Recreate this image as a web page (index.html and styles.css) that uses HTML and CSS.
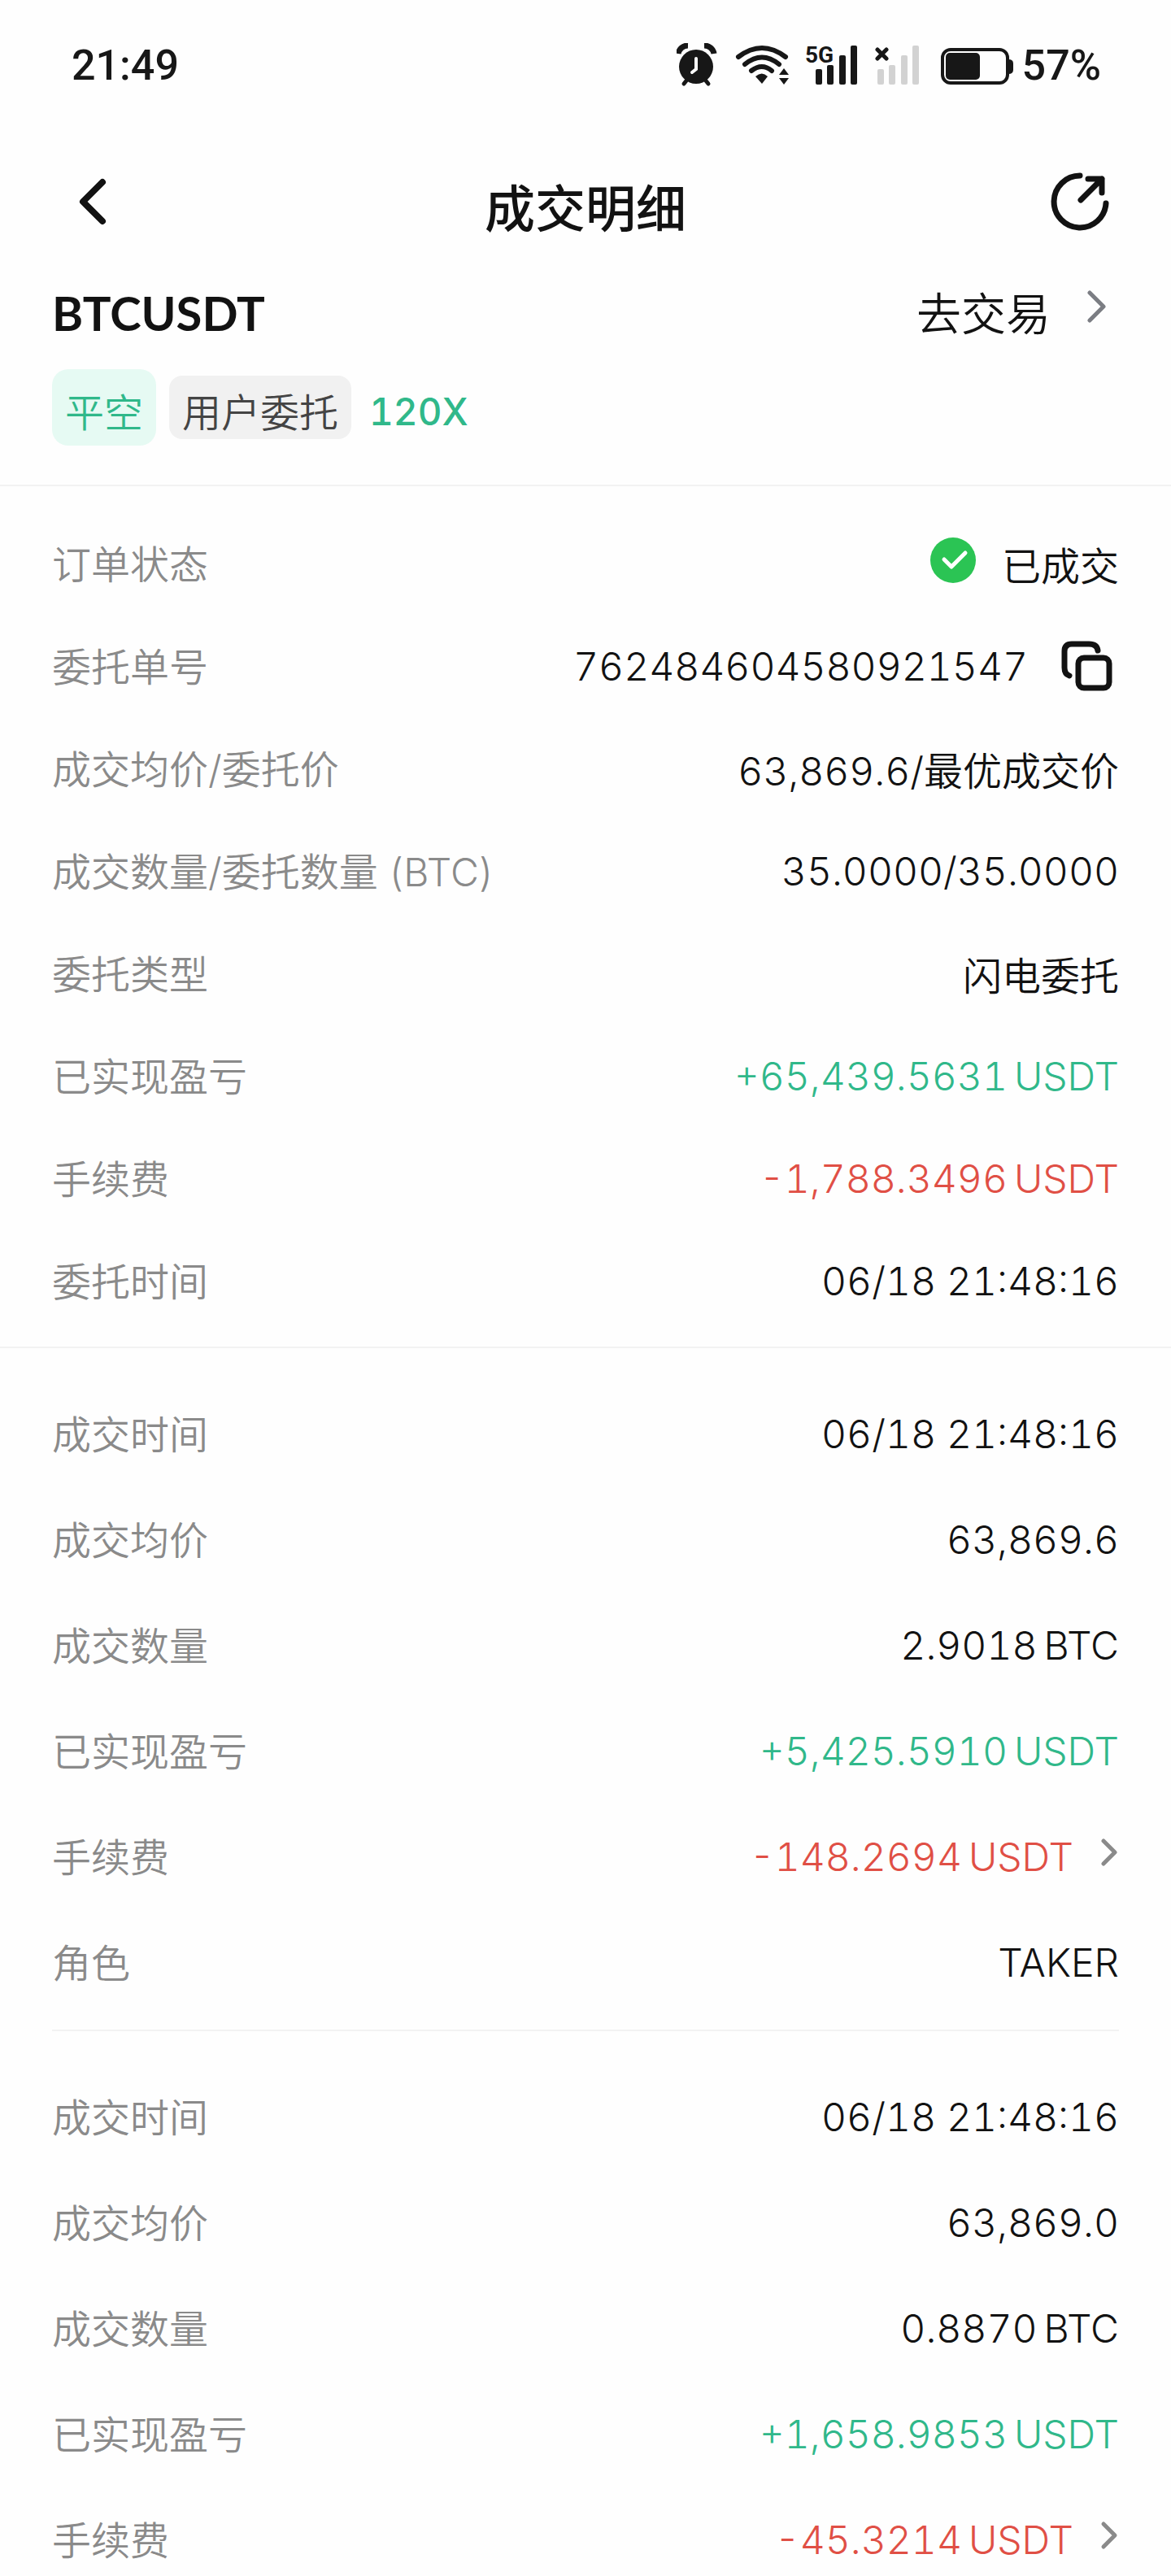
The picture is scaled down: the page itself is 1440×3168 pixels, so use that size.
FILE: index.html
```
<!DOCTYPE html>
<html lang="zh-CN">
<head>
    <meta charset="UTF-8">
    <meta name="viewport" content="width=device-width, initial-scale=1.0">
    <title>成交明细</title>
    <link rel="stylesheet" href="styles.css">
</head>
<body>
    <div class="app">
        <div class="status-bar">
            <span>21:49</span>
            <div class="status-icons">
                <svg width="52" height="54" viewBox="0 0 52 54">
                    <ellipse cx="24" cy="29" rx="21" ry="21" fill="#171717"/>
                    <path d="M2 13A12 12 0 0 1 14 3M46 13A12 12 0 0 0 34 3" stroke="#171717" stroke-width="7"/>
                    <path d="M13 45l-4 5M35 45l4 5" stroke="#171717" stroke-width="5" stroke-linecap="round"/>
                    <path d="M24 19v13l-5 4" fill="none" stroke="#fff" stroke-width="4" stroke-linecap="round"/>
                </svg>
                <svg width="66" height="54" viewBox="0 0 66 54">
                    <g fill="none" stroke="#171717" stroke-width="6" stroke-linecap="round">
                        <path d="M4 17Q33-5 62 17"/>
                        <path d="M12 26Q33 9 54 26"/>
                        <path d="M20 34Q33 24 45 34"/>
                    </g>
                    <path d="M25 41q8-7 15 0l-7 9z" fill="#171717"/>
                    <path d="M54 39l6-8 6 8zM54 43h12l-6 8z" fill="#171717"/>
                </svg>
                <svg class="signal" width="66" height="54" viewBox="0 0 66 54">
                    <text x="0" y="24" class="net-label">5G</text>
                    <g fill="#171717">
                        <rect x="13" y="32" width="8" height="19" rx="2"/>
                        <rect x="27" y="27" width="8" height="24" rx="2"/>
                        <rect x="42" y="15" width="8" height="36" rx="2"/>
                        <rect x="56" y="3" width="8" height="48" rx="2"/>
                    </g>
                </svg>
                <svg width="61" height="54" viewBox="0 0 61 54">
                    <path d="M3 8l11 11M14 8L3 19" stroke="#171717" stroke-width="5" stroke-linecap="round"/>
                    <g fill="#d2d2d2">
                        <rect x="3" y="32" width="8" height="19" rx="2"/>
                        <rect x="17" y="27" width="8" height="24" rx="2"/>
                        <rect x="32" y="15" width="8" height="36" rx="2"/>
                        <rect x="46" y="3" width="8" height="48" rx="2"/>
                    </g>
                </svg>
                <div class="battery">
                    <svg width="90" height="54" viewBox="0 0 90 54">
                        <rect x="2" y="8" width="80" height="41" rx="10" fill="none" stroke="#171717" stroke-width="4"/>
                        <rect x="6" y="12" width="42" height="33" rx="5" fill="#171717"/>
                        <path d="M83 20q6 0 6 5v8q0 5-6 5z" fill="#171717"/>
                    </svg>
                    <span>57%</span>
                </div>
            </div>
        </div>

        <header class="header">
            <button class="icon-btn" aria-label="返回">
                <svg width="72" height="72" viewBox="0 0 72 72">
                    <path d="M50 12L26 36l24 24" fill="none" stroke="#121212" stroke-width="8" stroke-linecap="round" stroke-linejoin="round"/>
                </svg>
            </button>
            <h1>成交明细</h1>
            <button class="icon-btn" aria-label="分享">
                <svg width="72" height="72" viewBox="0 0 72 72" fill="none" stroke="#121212" stroke-width="7" stroke-linecap="round" stroke-linejoin="round">
                    <path d="M36 4A32 32 0 1 0 68 38"/>
                    <path d="M37 34L63 8M46 8h17v17"/>
                </svg>
            </button>
        </header>

        <section class="summary">
            <div class="pair">
                <h2>BTCUSDT</h2>
                <a href="#" class="trade-link">去交易
                    <svg class="arrow" width="24" height="40" viewBox="0 0 24 40">
                        <path d="M4 3l17 17L4 37" fill="none" stroke="#7b7d83" stroke-width="5" stroke-linecap="round" stroke-linejoin="round"/>
                    </svg>
                </a>
            </div>
            <div class="tags">
                <span class="tag tag-short">平空</span>
                <span class="tag">用户委托</span>
                <span class="leverage">120X</span>
            </div>
        </section>

        <main class="content">
            <dl class="group order">
                <div class="row">
                    <dt>订单状态</dt>
                    <dd>
                        <svg class="check" width="56" height="56" viewBox="0 0 56 56">
                            <circle cx="28" cy="28" r="28" fill="#2bc454"/>
                            <path d="M17 27l9 9 17-17" fill="none" stroke="#fff" stroke-width="5" stroke-linecap="round" stroke-linejoin="round"/>
                        </svg>
                        已成交
                    </dd>
                </div>
                <div class="row">
                    <dt>委托单号</dt>
                    <dd>762484604580921547
                        <button class="copy-btn" aria-label="复制">
                            <svg width="72" height="64" viewBox="0 0 72 64" fill="none" stroke="#121212" stroke-width="7" stroke-linecap="round" stroke-linejoin="round">
                                <path d="M11 44Q5 42 5 34V14Q5 5 14 5H35Q45 5 46 13"/>
                                <rect x="22" y="22" width="38" height="37" rx="7"/>
                            </svg>
                        </button>
                    </dd>
                </div>
                <div class="row"><dt>成交均价/委托价</dt><dd>63,869.6/最优成交价</dd></div>
                <div class="row"><dt>成交数量/委托数量 (BTC)</dt><dd>35.0000/35.0000</dd></div>
                <div class="row"><dt>委托类型</dt><dd>闪电委托</dd></div>
                <div class="row"><dt>已实现盈亏</dt><dd class="up">+65,439.5631 <span class="unit">USDT</span></dd></div>
                <div class="row"><dt>手续费</dt><dd class="down">-1,788.3496 <span class="unit">USDT</span></dd></div>
                <div class="row"><dt>委托时间</dt><dd>06/18 21:48:16</dd></div>
            </dl>

            <dl class="group fill">
                <div class="row"><dt>成交时间</dt><dd>06/18 21:48:16</dd></div>
                <div class="row"><dt>成交均价</dt><dd>63,869.6</dd></div>
                <div class="row"><dt>成交数量</dt><dd>2.9018 <span class="unit">BTC</span></dd></div>
                <div class="row"><dt>已实现盈亏</dt><dd class="up">+5,425.5910 <span class="unit">USDT</span></dd></div>
                <div class="row">
                    <dt>手续费</dt>
                    <dd class="down">-148.2694 <span class="unit">USDT</span>
                        <svg class="arrow" width="24" height="40" viewBox="0 0 24 40">
                            <path d="M5 6l14 14L5 34" fill="none" stroke="#8a8a8a" stroke-width="5" stroke-linecap="round" stroke-linejoin="round"/>
                        </svg>
                    </dd>
                </div>
                <div class="row"><dt>角色</dt><dd>TAKER</dd></div>
            </dl>

            <dl class="group fill">
                <div class="row"><dt>成交时间</dt><dd>06/18 21:48:16</dd></div>
                <div class="row"><dt>成交均价</dt><dd>63,869.0</dd></div>
                <div class="row"><dt>成交数量</dt><dd>0.8870 <span class="unit">BTC</span></dd></div>
                <div class="row"><dt>已实现盈亏</dt><dd class="up">+1,658.9853 <span class="unit">USDT</span></dd></div>
                <div class="row">
                    <dt>手续费</dt>
                    <dd class="down">-45.3214 <span class="unit">USDT</span>
                        <svg class="arrow" width="24" height="40" viewBox="0 0 24 40">
                            <path d="M5 6l14 14L5 34" fill="none" stroke="#8a8a8a" stroke-width="5" stroke-linecap="round" stroke-linejoin="round"/>
                        </svg>
                    </dd>
                </div>
            </dl>
        </main>
    </div>
</body>
</html>
```
FILE: styles.css
```
* {
    box-sizing: border-box;
}
body {
    margin: 0;
    background: #fefefe;
    color: #121212;
    font-family: Inter, "Noto Sans CJK SC", sans-serif;
    font-size: 48px;
    font-weight: 350;
    font-variant-numeric: tabular-nums;
}
h1, h2, dl, dd {
    margin: 0;
}
svg {
    display: block;
    flex-shrink: 0;
}
button {
    padding: 0;
    border: none;
    background: none;
    cursor: pointer;
}
.app {
    display: flex;
    flex-direction: column;
    height: 100vh;
}
.status-bar {
    display: flex;
    justify-content: space-between;
    align-items: center;
    height: 160px;
    padding: 0 86px 0 88px;
    color: #171717;
    font-family: Roboto, sans-serif;
    font-size: 52px;
    font-weight: 500;
}
.status-icons {
    display: flex;
    align-items: center;
    gap: 20px;
}
.battery {
    display: flex;
    align-items: center;
    gap: 10px;
}
.signal {
    overflow: visible;
}
.net-label {
    font-size: 28px;
    font-weight: 700;
    fill: #171717;
}
.header {
    display: flex;
    justify-content: space-between;
    align-items: center;
    height: 176px;
    padding: 0 76px;
}
.header h1 {
    padding-top: 20px;
    font-size: 62px;
    font-weight: 500;
    line-height: 80px;
}
.summary {
    padding: 8px 64px 48px;
    border-bottom: 2px solid #f2f2f2;
}
.pair {
    display: flex;
    justify-content: space-between;
    align-items: center;
    height: 80px;
}
.pair h2 {
    font-family: Lato, sans-serif;
    font-size: 58px;
    font-weight: 700;
}
.trade-link {
    display: flex;
    align-items: center;
    padding: 0 16px 4px 0;
    color: #121212;
    font-size: 55px;
    text-decoration: none;
}
.trade-link .arrow {
    margin-left: 44px;
}
.tags {
    display: flex;
    align-items: center;
    gap: 16px;
    margin-top: 30px;
}
.tag {
    padding: 14px 16px 0;
    border-radius: 16px;
    background: #f1f1f1;
    color: #444;
    line-height: 64px;
}
.tag-short {
    padding: 22px 16px 8px;
    border-radius: 20px;
    background: #e6faf3;
    color: #30b88a;
}
.leverage {
    padding: 10px 6px 0;
    color: #30b88a;
    font-size: 46px;
    font-weight: 500;
}
.content {
    flex: 1;
    min-height: 0;
    overflow-y: auto;
    scrollbar-width: none;
}
.order {
    padding: 32px 64px 18px;
    border-bottom: 2px solid #f2f2f2;
}
.fill {
    margin: 0 64px;
    padding: 40px 0 18px;
    border-bottom: 2px solid #f2f2f2;
}
.row {
    display: flex;
    justify-content: space-between;
    align-items: center;
    height: 126px;
}
.fill .row {
    height: 130px;
}
dt {
    padding-bottom: 4px;
    color: #8a8a8a;
}
dd {
    display: flex;
    align-items: center;
}
.unit {
    margin-left: 8px;
}
.check {
    margin: 0 32px 8px 0;
}
.copy-btn {
    margin-left: 40px;
}
.arrow {
    margin: 0 0 10px 32px;
}
.up {
    color: #30b88a;
}
.down {
    color: #e04f45;
}
```
